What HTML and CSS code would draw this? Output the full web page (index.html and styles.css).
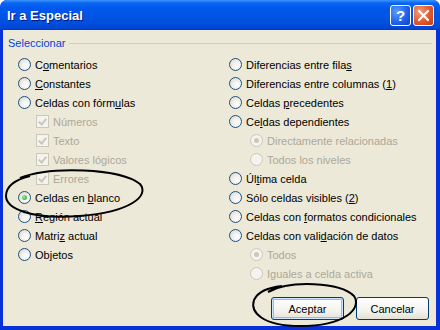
FILE: index.html
```html
<!DOCTYPE html>
<html lang="es">
<head>
    <meta charset="UTF-8">
    <title>Ir a Especial</title>
    <link rel="stylesheet" href="styles.css">
</head>
<body>
    <div class="window">
        <div class="titlebar">
            <span class="title">Ir a Especial</span>
            <div class="caption-buttons">
                <span class="cap-btn help">?</span>
                <span class="cap-btn close">
                    <svg width="13" height="13" viewBox="0 0 13 13"><path d="M2 2 L11 11 M11 2 L2 11" stroke="#fff" stroke-width="2.2" stroke-linecap="round"/></svg>
                </span>
            </div>
        </div>

        <div class="client">
            <div class="group-label"><span>Seleccionar</span></div>

            <div class="columns">
                <div class="col">
                    <div class="opt"><span class="radio"></span><span>C<u>o</u>mentarios</span></div>
                    <div class="opt"><span class="radio"></span><span><u>C</u>onstantes</span></div>
                    <div class="opt"><span class="radio"></span><span>Celdas con fórm<u>u</u>las</span></div>
                    <div class="opt sub disabled"><span class="check"></span><span>Números</span></div>
                    <div class="opt sub disabled"><span class="check"></span><span>Texto</span></div>
                    <div class="opt sub disabled"><span class="check"></span><span>Valores lógicos</span></div>
                    <div class="opt sub disabled"><span class="check"></span><span>Errores</span></div>
                    <div class="opt"><span class="radio on"></span><span>Celdas en <u>b</u>lanco</span></div>
                    <div class="opt"><span class="radio"></span><span><u>R</u>egión actual</span></div>
                    <div class="opt"><span class="radio"></span><span>Matri<u>z</u> actual</span></div>
                    <div class="opt"><span class="radio"></span><span>Ob<u>j</u>etos</span></div>
                </div>
                <div class="col">
                    <div class="opt"><span class="radio"></span><span>Diferencias entre fila<u>s</u></span></div>
                    <div class="opt"><span class="radio"></span><span>Diferencias entre columnas (<u>1</u>)</span></div>
                    <div class="opt"><span class="radio"></span><span>Celdas <u>p</u>recedentes</span></div>
                    <div class="opt"><span class="radio"></span><span>Ce<u>l</u>das dependientes</span></div>
                    <div class="opt sub disabled"><span class="radio on"></span><span>Directamente relacionadas</span></div>
                    <div class="opt sub disabled"><span class="radio"></span><span>Todos los niveles</span></div>
                    <div class="opt"><span class="radio"></span><span>Úl<u>t</u>ima celda</span></div>
                    <div class="opt"><span class="radio"></span><span>Sólo celdas visibles (<u>2</u>)</span></div>
                    <div class="opt"><span class="radio"></span><span>Celdas con <u>f</u>ormatos condicionales</span></div>
                    <div class="opt"><span class="radio"></span><span>Celdas con vali<u>d</u>ación de datos</span></div>
                    <div class="opt sub disabled"><span class="radio on"></span><span>Todos</span></div>
                    <div class="opt sub disabled"><span class="radio"></span><span>Iguales a celda activa</span></div>
                </div>
            </div>

            <div class="buttons">
                <button class="btn default">Aceptar</button>
                <button class="btn">Cancelar</button>
            </div>
        </div>

        <!-- hand-drawn marks over the dialog -->
        <svg class="marks" width="440" height="330" viewBox="0 0 440 330">
            <path d="M20 178 C 50 166, 120 168, 140 184 C 150 196, 130 212, 80 216 C 30 220, 6 208, 6 196 C 6 186, 14 180, 30 176" fill="none" stroke="#000" stroke-width="2"/>
            <path d="M268 292 C 290 280, 340 282, 354 296 C 362 308, 346 326, 300 326 C 262 326, 250 312, 254 300 C 258 292, 266 288, 282 286" fill="none" stroke="#000" stroke-width="2"/>
        </svg>
    </div>
</body>
</html>
```

FILE: styles.css
```css
body { margin: 0; background: #fff; font-family: Tahoma, "Liberation Sans", Arial, sans-serif; font-size: 11px; }
.window { position: relative; width: 440px; height: 330px; background: #0831D9; border-radius: 7px 7px 0 0; overflow: hidden; display: flex; flex-direction: column; }
.titlebar { height: 30px; flex: none; display: flex; align-items: center; justify-content: space-between; padding: 0 6px 0 7px; border-radius: 7px 7px 0 0;
    background: linear-gradient(#3D95FF 0, #0A66F0 3px, #0058EE 8px, #0055E5 15px, #0050DE 22px, #0046D5 28px, #0039C0 30px); }
.title { color: #fff; font-family: "Liberation Sans", Arial, sans-serif; font-weight: bold; font-size: 13px; text-shadow: 1px 1px #0A1883; padding-top: 1px; }
.caption-buttons { display: flex; gap: 2px; padding-top: 1px; }
.cap-btn { width: 19px; height: 19px; border: 1px solid #fff; border-radius: 3px; display: flex; align-items: center; justify-content: center; color: #fff; }
.help { background: radial-gradient(circle at 30% 30%, #5A9CFF, #1E5FEA 60%, #1140C8); font-family: "Liberation Sans", Arial, sans-serif; font-weight: bold; font-size: 15px; }
.close { background: radial-gradient(circle at 30% 30%, #F19A7E, #E15A2E 55%, #C33C12); }
.client { flex: 1; margin: 0 4px 4px 3px; background: #ECE9D8; padding: 6px 0 0 5px; display: flex; flex-direction: column; }
.group-label { display: flex; align-items: center; color: #0046D5; height: 14px; margin-right: 4px; }
.group-label::after { content: ""; flex: 1; border-top: 1px solid #D0D0BF; margin-left: 4px; }
.columns { display: grid; grid-template-columns: 211px 1fr; margin-top: 5px; }
.opt { height: 19px; display: flex; align-items: center; color: #000; padding-left: 10px; white-space: nowrap; }
.opt.sub { padding-left: 28px; }
.col + .col .opt { padding-left: 10px; }
.col + .col .opt.sub { padding-left: 31px; }
.disabled { color: #ACA899; }
.radio { width: 11px; height: 11px; border: 1px solid #1C5180; border-radius: 50%; margin-right: 4px; flex: none; position: relative;
    background: radial-gradient(circle at 65% 65%, #fff 0, #F2F1EC 40%, #D6D3C5 100%); }
.radio.on::after { content: ""; position: absolute; left: 3px; top: 3px; width: 5px; height: 5px; border-radius: 50%; background: radial-gradient(circle at 35% 35%, #A0E898, #21A121); }
.disabled .radio { border-color: #CAC8BB; background: #F4F3EE; }
.disabled .radio.on::after { background: #CAC8BB; }
.check { width: 11px; height: 11px; border: 1px solid #CAC8BB; background: #F4F3EE; margin-right: 4px; flex: none; position: relative; }
.check::after { content: ""; position: absolute; left: 3px; top: 1px; width: 3px; height: 6px; border: solid #CAC8BB; border-width: 0 2px 2px 0; transform: rotate(40deg); }
.buttons { margin-top: auto; display: flex; justify-content: flex-end; gap: 12px; padding: 0 7px 6px 0; }
.btn { width: 73px; height: 23px; border: 1px solid #003C74; border-radius: 3px; font-family: inherit; font-size: 11px; color: #000; padding: 0;
    background: linear-gradient(#FFFFFF, #F4F3EE 60%, #E3E1D6); }
.btn.default { box-shadow: inset 0 0 0 1px #CEE7FF, inset 0 0 0 2px #98B8F0; }
.marks { position: absolute; left: 0; top: 0; pointer-events: none; }
```
